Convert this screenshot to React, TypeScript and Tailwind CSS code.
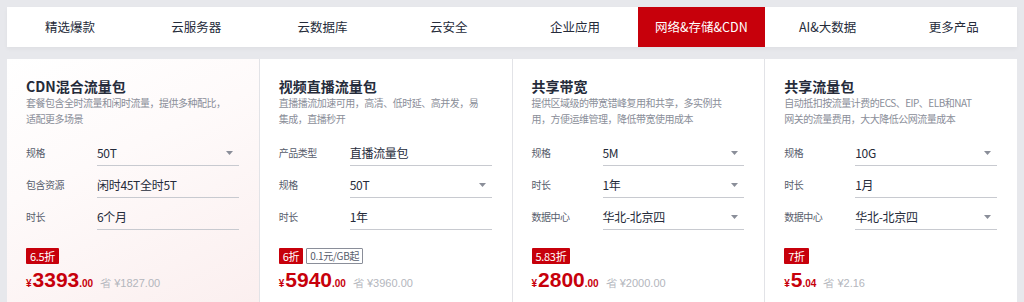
import React from 'react';

const tabs = ['精选爆款', '云服务器', '云数据库', '云安全', '企业应用', '网络&存储&CDN', 'AI&大数据', '更多产品'];

interface Row {
  label: string;
  value: string;
  select?: boolean;
}

interface Product {
  title: string;
  desc: string[];
  rows: Row[];
  discount: string;
  tag?: string;
  price: string;
  cents: string;
  save: string;
  decor?: boolean;
}

const products: Product[] = [
  {
    title: 'CDN混合流量包',
    desc: ['套餐包含全时流量和闲时流量，提供多种配比，', '适配更多场景'],
    rows: [
      { label: '规格', value: '50T', select: true },
      { label: '包含资源', value: '闲时45T全时5T' },
      { label: '时长', value: '6个月' },
    ],
    discount: '6.5折',
    price: '3393',
    cents: '.00',
    save: '省 ¥1827.00',
    decor: true,
  },
  {
    title: '视频直播流量包',
    desc: ['直播播流加速可用，高清、低时延、高并发，易', '集成，直播秒开'],
    rows: [
      { label: '产品类型', value: '直播流量包' },
      { label: '规格', value: '50T', select: true },
      { label: '时长', value: '1年' },
    ],
    discount: '6折',
    tag: '0.1元/GB起',
    price: '5940',
    cents: '.00',
    save: '省 ¥3960.00',
  },
  {
    title: '共享带宽',
    desc: ['提供区域级的带宽错峰复用和共享，多实例共', '用，方便运维管理，降低带宽使用成本'],
    rows: [
      { label: '规格', value: '5M', select: true },
      { label: '时长', value: '1年', select: true },
      { label: '数据中心', value: '华北-北京四', select: true },
    ],
    discount: '5.83折',
    price: '2800',
    cents: '.00',
    save: '省 ¥2000.00',
  },
  {
    title: '共享流量包',
    desc: ['自动抵扣按流量计费的ECS、EIP、ELB和NAT', '网关的流量费用，大大降低公网流量成本'],
    rows: [
      { label: '规格', value: '10G', select: true },
      { label: '时长', value: '1月' },
      { label: '数据中心', value: '华北-北京四', select: true },
    ],
    discount: '7折',
    price: '5',
    cents: '.04',
    save: '省 ¥2.16',
  },
];

const Caret = () => (
  <svg width="7" height="4" viewBox="0 0 7 4" className="mr-[6px]">
    <path d="M0 0 L7 0 L3.5 4 Z" fill="#8a8e99" />
  </svg>
);

const Card: React.FC<{ p: Product }> = ({ p }) => (
  <div
    className={
      'h-[243px] pt-[18px] pl-[19px] pr-[20px] ' +
      (p.decor
        ? 'bg-[linear-gradient(155deg,#ffffff_0%,#fefafa_40%,#fbefef_100%)]'
        : 'bg-white')
    }
  >
    <div className="text-[14px] leading-[18px] font-bold text-[#252b3a]">{p.title}</div>
    <div className="text-[10px] leading-[16px] tracking-[-0.5px] text-[#8a8e99] whitespace-nowrap">
      {p.desc.map((d) => (
        <div key={d}>{d}</div>
      ))}
    </div>
    <div className="mt-[14px] flex flex-col gap-[7px]">
      {p.rows.map((r) => (
        <div key={r.label} className="flex items-start">
          <div className="w-[71px] shrink-0 text-[10px] tracking-[-0.5px] leading-[24px] text-[#575d6c]">
            {r.label}
          </div>
          <div className="flex-1 h-[25px] border-b border-[#c8cad0] flex items-center justify-between">
            <span className="text-[12px] tracking-[-0.3px] leading-[24px] text-[#252b3a]">{r.value}</span>
            {r.select && <Caret />}
          </div>
        </div>
      ))}
    </div>
    <div className="mt-[18px] flex items-center gap-[3px]">
      <span className="h-[16px] px-[4px] bg-[#c7000b] text-white text-[11px] tracking-[-0.3px] leading-[16px] rounded-[1px]">
        {p.discount}
      </span>
      {p.tag && (
        <span className="h-[16px] px-[3px] border border-[#8a8e99] text-[#575d6c] text-[10px] tracking-[-0.3px] leading-[14px] rounded-[1px]">
          {p.tag}
        </span>
      )}
    </div>
    <div className="mt-[2px] flex items-baseline h-[28px] font-['Liberation_Sans',sans-serif] text-[#c7000b]">
      <span className="text-[10px] font-bold mr-[1px]">¥</span>
      <span className="text-[21px] leading-[28px] font-bold">{p.price}</span>
      <span className="text-[10px] font-bold">{p.cents}</span>
      <span className="ml-[7px] text-[11px] text-[#b3b6bd]">{p.save}</span>
    </div>
  </div>
);

export default function App() {
  return (
    <div className="w-[1024px] h-[302px] overflow-hidden bg-[#e7e8ec] px-[7px] pt-[7px] font-['Noto_Sans_CJK_SC','Liberation_Sans',sans-serif]">
      <div className="grid grid-cols-8 bg-white h-[40px] shadow-[0_2px_4px_rgba(0,0,0,0.04)]">
        {tabs.map((t, i) => (
          <div
            key={t}
            className={
              'flex items-center justify-center text-[12.5px] ' +
              (i === 5 ? 'bg-[#c7000b] text-white' : 'text-[#252b3a]')
            }
          >
            {t}
          </div>
        ))}
      </div>
      <div className="mt-[12px] grid grid-cols-4 gap-px bg-[#e2e3e7]">
        {products.map((p) => (
          <Card key={p.title} p={p} />
        ))}
      </div>
    </div>
  );
}
